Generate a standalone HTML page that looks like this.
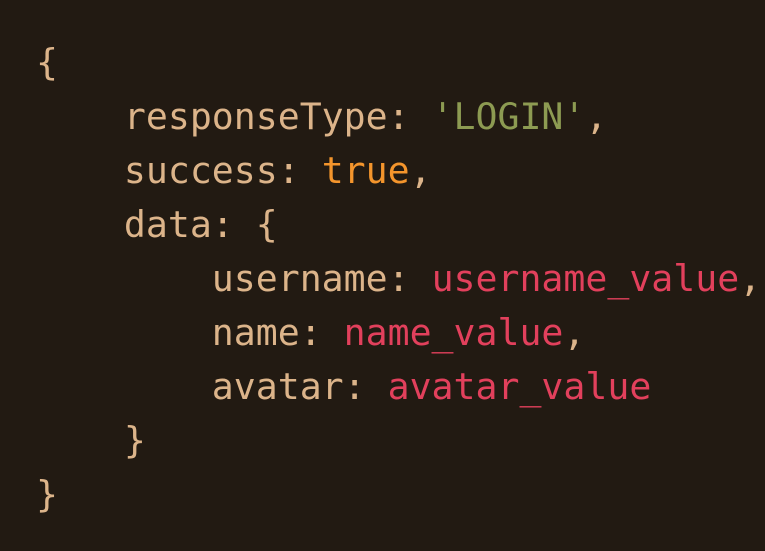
<!DOCTYPE html>
<html><head><meta charset="utf-8"><style>
html,body{margin:0;padding:0;width:765px;height:551px;background:#221a12;overflow:hidden}
pre{position:absolute;left:36px;top:36px;margin:0;font-family:"DejaVu Sans Mono","Liberation Mono",monospace;font-size:36.5px;line-height:54px;color:#dcb48a}
.o{color:#f4952c}.g{color:#8d9b52}.r{color:#e2405c}
</style></head><body>
<pre>{
    responseType: <span class="g">'LOGIN'</span>,
    success: <span class="o">true</span>,
    data: {
        username: <span class="r">username_value</span>,
        name: <span class="r">name_value</span>,
        avatar: <span class="r">avatar_value</span>
    }
}</pre>
</body></html>
